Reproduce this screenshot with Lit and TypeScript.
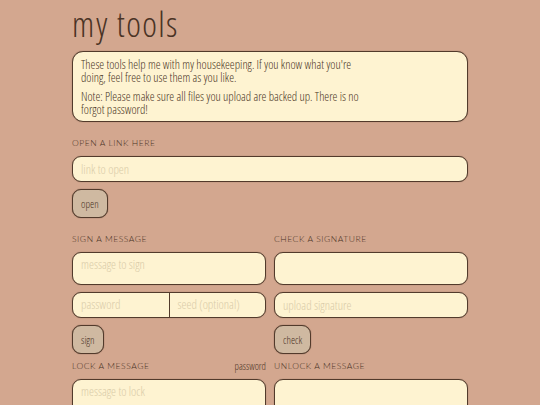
import { LitElement, html, css } from "lit";
import { customElement } from "lit/decorators.js";

@customElement("app-root")
export class AppRoot extends LitElement {
  static styles = css`
    :host {
      display: block;
      height: 405px;
      overflow: hidden;
      background: #d3a78f;
      color: #4a3325;
      font-family: "Open Sans", "Lato", sans-serif;
      font-stretch: 82%;
      font-weight: 300;
    }
    .page {
      box-sizing: border-box;
      width: 396px;
      margin-left: 72px;
      display: flex;
      flex-direction: column;
    }
    h1 {
      margin: 0;
      height: 51px;
      font-size: 35px;
      line-height: 48px;
      font-weight: 300;
      letter-spacing: 1.4px;
    }
    .intro {
      box-sizing: border-box;
      height: 71px;
      padding: 6px 8px;
      background: #fef3d1;
      border: 1px solid #523a2b;
      box-shadow: 0 0 1px rgba(82, 58, 43, 0.6);
      border-radius: 11px;
      font-size: 12.25px;
      line-height: 13px;
    }
    .intro p { margin: 0 0 6px; width: 286px; }
    .label {
      font-family: "Lato", sans-serif;
      font-stretch: normal;
      font-weight: 300;
      font-size: 8.5px;
      letter-spacing: 0.55px;
      line-height: 12px;
      text-transform: uppercase;
      color: #4a3325;
      display: flex;
      justify-content: space-between;
      align-items: center;
    }
    .hint {
      font-family: "Open Sans", sans-serif;
      font-stretch: 78%;
      font-weight: 300;
      text-transform: none;
      letter-spacing: 0;
      font-size: 10px;
      color: #4a3325;
    }
    .box {
      box-sizing: border-box;
      background: #fef3d1;
      border: 1px solid #523a2b;
      box-shadow: 0 0 1px rgba(82, 58, 43, 0.6);
      border-radius: 9px;
      font-size: 12.5px;
      color: #d9cba8;
      padding: 0 8px;
      display: flex;
      align-items: center;
    }
    .field { height: 26px; }
    .area { height: 33px; align-items: flex-start; padding-top: 3px; }
    .tall { height: 60px; align-items: flex-start; padding-top: 3px; }
    .split { padding: 0; }
    .split span { flex: 1; padding: 0 8px; line-height: 24px; }
    .split span + span { border-left: 1px solid #523a2b; }
    .btn {
      box-sizing: border-box;
      align-self: flex-start;
      height: 29px;
      padding: 0 8px;
      display: flex;
      align-items: center;
      background: #cfb9a1;
      border: 1px solid #523a2b;
      box-shadow: 0 0 1px #523a2b;
      border-radius: 9px;
      font-size: 10.5px;
      color: #4a3325;
    }
    .open { margin-top: 7px; }
    .link-label { margin-top: 15px; margin-bottom: 7px; }
    .cols {
      display: grid;
      grid-template-columns: 1fr 1fr;
      column-gap: 8px;
      margin-top: 15px;
    }
    .col { display: flex; flex-direction: column; min-width: 0; }
    .col .label { margin-bottom: 7px; }
    .col .field { margin-top: 7px; }
    .col .btn { margin-top: 7px; }
    .lower { margin-top: 6px; }
  `;

  render() {
    return html`
      <div class="page">
        <h1>my tools</h1>
        <div class="intro">
          <p>These tools help me with my housekeeping. If you know what you're doing, feel free to use them as you like.</p>
          <p>Note: Please make sure all files you upload are backed up. There is no forgot password!</p>
        </div>
        <div class="label link-label">open a link here</div>
        <div class="box field">link to open</div>
        <div class="btn open">open</div>
        <div class="cols">
          <div class="col">
            <div class="label">sign a message</div>
            <div class="box area">message to sign</div>
            <div class="box field split"><span>password</span><span>seed (optional)</span></div>
            <div class="btn">sign</div>
          </div>
          <div class="col">
            <div class="label">check a signature</div>
            <div class="box area"></div>
            <div class="box field">upload signature</div>
            <div class="btn">check</div>
          </div>
        </div>
        <div class="cols lower">
          <div class="col">
            <div class="label">lock a message <span class="hint">password</span></div>
            <div class="box tall">message to lock</div>
          </div>
          <div class="col">
            <div class="label">unlock a message</div>
            <div class="box tall"></div>
          </div>
        </div>
      </div>
    `;
  }
}
